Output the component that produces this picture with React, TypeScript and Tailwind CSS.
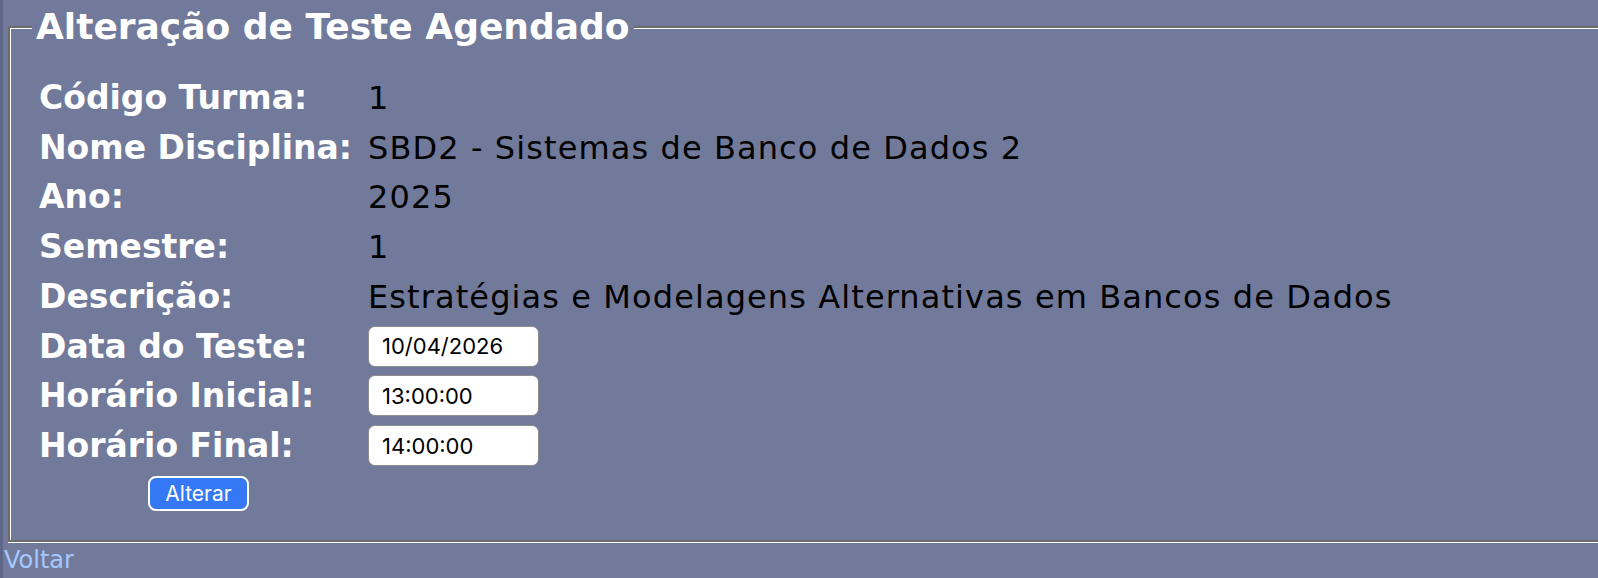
export default function App() {
  const rows = [
    { label: "Código Turma:", value: "1" },
    { label: "Nome Disciplina:", value: "SBD2 - Sistemas de Banco de Dados 2" },
    { label: "Ano:", value: "2025" },
    { label: "Semestre:", value: "1" },
    { label: "Descrição:", value: "Estratégias e Modelagens Alternativas em Bancos de Dados" },
  ];

  const inputs = [
    { label: "Data do Teste:", value: "10/04/2026" },
    { label: "Horário Inicial:", value: "13:00:00" },
    { label: "Horário Final:", value: "14:00:00" },
  ];

  return (
    <div className="min-h-[578px] overflow-hidden bg-[#717a9a] border-l-[3px] border-[#5e6787] font-['DejaVu_Sans',Verdana,sans-serif]">
      <fieldset className="ml-[5px] mt-[9px] border-t-2 border-l-2 border-b-2 border-r-0 border-[#6c6c6c] shadow-[inset_1px_1px_0_#ffffff,0_1px_0_#ffffff] pl-[29px] pt-[28px] pb-[29px]">
        <legend className="-ml-[7px] px-[4px] bg-[#717a9a] text-[36px] leading-[36px] font-bold text-white">
          Alteração de Teste Agendado
        </legend>

        <div className="grid grid-cols-[329px_1fr] auto-rows-[49.7px] items-center">
          {rows.map((r) => (
            <div key={r.label} className="contents">
              <div className="text-[33px] font-bold text-white whitespace-nowrap">{r.label}</div>
              <div className="text-[32px] tracking-[1.1px] text-black whitespace-nowrap">{r.value}</div>
            </div>
          ))}
          {inputs.map((r) => (
            <div key={r.label} className="contents">
              <div className="text-[33px] font-bold text-white whitespace-nowrap">{r.label}</div>
              <div>
                <input
                  type="text"
                  defaultValue={r.value}
                  className="w-[171px] h-[41px] rounded-[7px] border border-[#8d8d8d] bg-white pl-[13px] text-[22px] text-black font-['Inter',sans-serif] outline-none"
                />
              </div>
            </div>
          ))}
        </div>

        <button className="mt-[5px] ml-[109px] w-[101px] h-[35px] rounded-[8px] border-2 border-white bg-[#3478f6] text-white text-[21px] font-['Inter',sans-serif]">
          Alterar
        </button>
      </fieldset>

      <a href="#" className="block mt-[5px] ml-[1px] text-[24px] leading-[27px] text-[#a4c8ff]">
        Voltar
      </a>
    </div>
  );
}
